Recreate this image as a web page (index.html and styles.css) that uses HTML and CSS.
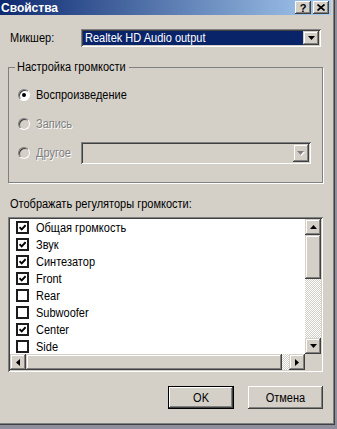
FILE: index.html
```html
<!DOCTYPE html>
<html lang="ru">

<head>
  <meta charset="UTF-8">
  <title>Свойства</title>
  <link rel="stylesheet" href="styles.css">
</head>

<body>
  <div class="window">
    <div class="titlebar">
      <span class="title">Свойства</span>
      <div class="title-buttons">
        <span class="tbtn">?</span>
        <span class="tbtn">
          <svg width="8" height="7" viewBox="0 0 8 7"><path d="M0.5 0.5L7.5 6.5M7.5 0.5L0.5 6.5" stroke="#000" stroke-width="1.7" fill="none"/></svg>
        </span>
      </div>
    </div>

    <div class="client">
      <div class="mixer-row">
        <span class="mixer-label"><span class="t">Микшер:</span></span>
        <div class="combo">
          <div class="combo-value"><span class="t">Realtek HD Audio output</span></div>
          <div class="combo-btn">
            <svg width="7" height="4" viewBox="0 0 7 4"><path d="M0 0H7L3.5 4Z" fill="#000"/></svg>
          </div>
        </div>
      </div>

      <fieldset class="group">
        <legend><span class="t">Настройка громкости</span></legend>
        <div class="radio-row">
          <span class="radio checked"></span>
          <span class="t">Воспроизведение</span>
        </div>
        <div class="radio-row disabled">
          <span class="radio"></span>
          <span class="t">Запись</span>
        </div>
        <div class="radio-row disabled">
          <span class="radio"></span>
          <span class="other-label"><span class="t">Другое</span></span>
          <div class="combo combo-disabled">
            <div class="combo-value"></div>
            <div class="combo-btn">
              <svg width="8" height="5" viewBox="0 0 8 5"><path d="M1 1H8L4.5 5Z" fill="#fff"/><path d="M0 0H7L3.5 4Z" fill="#808080"/></svg>
            </div>
          </div>
        </div>
      </fieldset>

      <div class="list-label"><span class="t">Отображать регуляторы громкости:</span></div>

      <div class="listbox">
        <div class="list-main">
          <ul class="items">
            <li class="item"><span class="check on"><svg width="7" height="7" viewBox="0 0 7 7"><path d="M0.5 3.2L2.7 5.4L6.6 1.2" stroke="#000" stroke-width="1.9" fill="none"/></svg></span><span class="t">Общая громкость</span></li>
            <li class="item"><span class="check on"><svg width="7" height="7" viewBox="0 0 7 7"><path d="M0.5 3.2L2.7 5.4L6.6 1.2" stroke="#000" stroke-width="1.9" fill="none"/></svg></span><span class="t">Звук</span></li>
            <li class="item"><span class="check on"><svg width="7" height="7" viewBox="0 0 7 7"><path d="M0.5 3.2L2.7 5.4L6.6 1.2" stroke="#000" stroke-width="1.9" fill="none"/></svg></span><span class="t">Синтезатор</span></li>
            <li class="item"><span class="check on"><svg width="7" height="7" viewBox="0 0 7 7"><path d="M0.5 3.2L2.7 5.4L6.6 1.2" stroke="#000" stroke-width="1.9" fill="none"/></svg></span><span class="t">Front</span></li>
            <li class="item"><span class="check"></span><span class="t">Rear</span></li>
            <li class="item"><span class="check"></span><span class="t">Subwoofer</span></li>
            <li class="item"><span class="check on"><svg width="7" height="7" viewBox="0 0 7 7"><path d="M0.5 3.2L2.7 5.4L6.6 1.2" stroke="#000" stroke-width="1.9" fill="none"/></svg></span><span class="t">Center</span></li>
            <li class="item"><span class="check"></span><span class="t">Side</span></li>
          </ul>
          <div class="vscroll">
            <div class="sb-btn"><svg width="7" height="4" viewBox="0 0 7 4"><path d="M0 4H7L3.5 0Z" fill="#000"/></svg></div>
            <div class="vthumb"></div>
            <div class="track"></div>
            <div class="sb-btn"><svg width="7" height="4" viewBox="0 0 7 4"><path d="M0 0H7L3.5 4Z" fill="#000"/></svg></div>
          </div>
        </div>
        <div class="hscroll-row">
          <div class="hscroll">
            <div class="sb-btn"><svg width="4" height="7" viewBox="0 0 4 7"><path d="M4 0V7L0 3.5Z" fill="#000"/></svg></div>
            <div class="hthumb"></div>
            <div class="track"></div>
            <div class="sb-btn"><svg width="4" height="7" viewBox="0 0 4 7"><path d="M0 0V7L4 3.5Z" fill="#000"/></svg></div>
          </div>
          <div class="corner"></div>
        </div>
      </div>

      <div class="actions">
        <button class="btn btn-default"><span class="t">OK</span></button>
        <button class="btn btn-cancel"><span class="t">Отмена</span></button>
      </div>
    </div>
  </div>
</body>

</html>
```

FILE: styles.css
```css
* {
  margin: 0;
  padding: 0;
  box-sizing: border-box;
}

body {
  font-family: "Liberation Sans", Arial, sans-serif;
  font-size: 12.5px;
  line-height: 14px;
  color: #000;
  background: #8f8e9c;
  height: 429px;
  overflow: hidden;
}

/* the dialog font is narrower than Arial */
.t {
  display: inline-block;
  white-space: nowrap;
  transform: scaleX(0.88);
  transform-origin: left center;
}

.window {
  width: 335px;
  height: 425px;
  background: #d4d0c8;
  display: flex;
  flex-direction: column;
  box-shadow: inset -1px -1px 0 #404040, inset -2px -2px 0 #808080;
}

/* title bar */
.titlebar {
  height: 15px;
  margin-right: 4px;
  padding-right: 2px;
  display: flex;
  align-items: center;
  justify-content: space-between;
  background: linear-gradient(to right, #0d2a70, #a6caf0);
  color: #fff;
  font-size: 12px;
  font-weight: bold;
}

.title {
  margin-left: 1px;
}

.title-buttons {
  display: flex;
  gap: 2px;
}

.tbtn {
  width: 16px;
  height: 13px;
  display: flex;
  align-items: center;
  justify-content: center;
  background: #d4d0c8;
  color: #000;
  font-size: 11px;
  box-shadow: inset -1px -1px 0 #404040, inset 1px 1px 0 #fff, inset -2px -2px 0 #808080;
}

/* dialog body */
.client {
  flex: 1;
  padding: 0 12px 0 8px;
  display: flex;
  flex-direction: column;
}

.mixer-row {
  display: flex;
  align-items: center;
  margin-top: 14px;
}

.mixer-label {
  margin-left: 2px;
  width: 71px;
}

.combo {
  width: 240px;
  height: 18px;
  padding: 2px;
  display: flex;
  background: #fff;
  box-shadow: inset 1px 1px 0 #808080, inset -1px -1px 0 #fff, inset 2px 2px 0 #404040, inset -2px -2px 0 #d4d0c8;
}

.combo-value {
  flex: 1;
  background: #0a246a;
  color: #fff;
  padding-left: 2px;
  white-space: nowrap;
  overflow: hidden;
}

.combo-btn {
  width: 16px;
  display: flex;
  align-items: center;
  justify-content: center;
  background: #d4d0c8;
  box-shadow: inset -1px -1px 0 #404040, inset 1px 1px 0 #d4d0c8, inset -2px -2px 0 #808080, inset 2px 2px 0 #fff;
}

.combo-disabled {
  width: 230px;
  height: 22px;
  margin-left: 8px;
  background: #d4d0c8;
}

.combo-disabled .combo-value {
  background: #d4d0c8;
}

/* group box */
.group {
  margin-top: 13px;
  width: 315px;
  border: 1px solid #808080;
  box-shadow: 1px 1px 0 #fff;
  padding: 10px 6px 18px 6px;
  display: flex;
  flex-direction: column;
  gap: 7px;
}

.group legend {
  padding: 0 2px;
  width: 114px;
}

.radio-row {
  height: 22px;
  display: flex;
  align-items: center;
  padding-left: 3px;
}

.radio {
  width: 12px;
  height: 12px;
  margin-right: 6px;
  border-radius: 50%;
  border: 1px solid;
  border-color: #808080 #fff #fff #808080;
  background: #fff;
  box-shadow: inset 1px 1px 0 #404040;
  display: flex;
  align-items: center;
  justify-content: center;
}

.radio.checked::after {
  content: "";
  width: 4px;
  height: 4px;
  border-radius: 50%;
  background: #000;
}

.disabled {
  color: #808080;
  text-shadow: 1px 1px 0 #fff;
}

.disabled .radio {
  background: #d4d0c8;
}

.other-label {
  width: 37px;
}

.list-label {
  margin-top: 14px;
  margin-left: 2px;
}

/* list with checkboxes */
.listbox {
  margin-top: 6px;
  width: 315px;
  height: 155px;
  padding: 2px;
  display: flex;
  flex-direction: column;
  background: #fff;
  box-shadow: inset 1px 1px 0 #808080, inset -1px -1px 0 #fff, inset 2px 2px 0 #404040, inset -2px -2px 0 #d4d0c8;
}

.list-main {
  flex: 1;
  min-height: 0;
  display: flex;
}

.items {
  flex: 1;
  list-style: none;
  overflow: hidden;
}

.item {
  height: 17px;
  display: flex;
  align-items: center;
  padding-left: 6px;
  gap: 7px;
  white-space: nowrap;
}

.check {
  width: 13px;
  height: 13px;
  flex: none;
  border: 2px solid #1c1c1c;
  background: #fff;
  display: flex;
  align-items: center;
  justify-content: center;
}

.vscroll {
  width: 16px;
  display: flex;
  flex-direction: column;
}

.hscroll-row {
  height: 16px;
  display: flex;
}

.hscroll {
  flex: 1;
  display: flex;
}

.corner {
  width: 16px;
  background: #d4d0c8;
}

.sb-btn,
.vthumb,
.hthumb {
  flex: none;
  background: #d4d0c8;
  box-shadow: inset -1px -1px 0 #404040, inset 1px 1px 0 #d4d0c8, inset -2px -2px 0 #808080, inset 2px 2px 0 #fff;
}

.sb-btn {
  width: 16px;
  height: 16px;
  display: flex;
  align-items: center;
  justify-content: center;
}

.vthumb {
  height: 44px;
}

.hthumb {
  width: 256px;
}

.track {
  flex: 1;
  background: repeating-conic-gradient(#d4d0c8 0 25%, #fff 0 50%) 0 0 / 2px 2px;
}

/* buttons */
.actions {
  margin-top: 14px;
  display: flex;
  justify-content: flex-end;
  gap: 14px;
}

.btn {
  height: 23px;
  font-family: inherit;
  font-size: 12.5px;
  color: #000;
  border: none;
  background: #d4d0c8;
  box-shadow: inset -1px -1px 0 #404040, inset 1px 1px 0 #fff, inset -2px -2px 0 #808080;
}

.btn .t {
  transform-origin: center;
}

.btn-default {
  width: 66px;
  border: 1px solid #000;
}

.btn-cancel {
  width: 75px;
}
```
